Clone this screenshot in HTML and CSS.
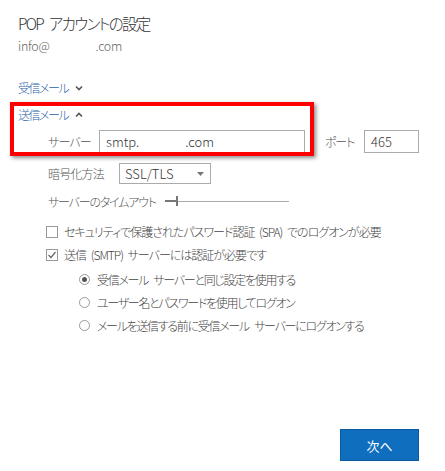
FILE: index.html
```html
<!DOCTYPE html>
<html lang="ja">
<head>
    <meta charset="UTF-8">
    <meta name="viewport" content="width=device-width, initial-scale=1.0">
    <title>POP アカウントの設定</title>
    <link rel="stylesheet" href="styles.css">
</head>
<body>
    <div class="page">
        <h1 class="title">POP アカウントの設定</h1>
        <div class="account">info@<span class="masked masked-mail"></span>.com</div>

        <!-- 受信メール (collapsed) -->
        <div class="section-toggle section-incoming">受信メール
            <svg class="chevron" width="8" height="6" viewBox="0 0 8 6"><path d="M1 1.5 L4 4.5 L7 1.5" fill="none" stroke="#555" stroke-width="1.6"/></svg>
        </div>

        <!-- 送信メール (expanded) -->
        <div class="section-toggle section-outgoing">送信メール
            <svg class="chevron" width="8" height="6" viewBox="0 0 8 6"><path d="M1 4.5 L4 1.5 L7 4.5" fill="none" stroke="#555" stroke-width="1.6"/></svg>
        </div>

        <div class="row row-server">
            <span class="field-label label-server">サーバー</span>
            <div class="textbox textbox-server">smtp.<span class="masked masked-host"></span>.com</div>
            <span class="field-label label-port">ポート</span>
            <div class="textbox textbox-port">465</div>
        </div>

        <div class="row row-crypto">
            <span class="field-label label-crypto">暗号化方法</span>
            <div class="select">SSL/TLS
                <svg class="select-arrow" width="7" height="4" viewBox="0 0 7 4"><path d="M0 0 H7 L3.5 4 Z" fill="#777"/></svg>
            </div>
        </div>

        <div class="row row-timeout">
            <span class="field-label label-timeout">サーバーのタイムアウト</span>
            <div class="slider">
                <div class="slider-fill"></div>
                <div class="slider-thumb"></div>
                <div class="slider-track"></div>
            </div>
        </div>

        <div class="checks">
            <div class="check">
                <span class="checkbox"></span>
                <span>セキュリティで保護されたパスワード認証 (SPA) でのログオンが必要</span>
            </div>
            <div class="check">
                <span class="checkbox">
                    <svg width="10" height="10" viewBox="0 0 10 10"><path d="M1.5 5 L4 7.5 L8.5 2" fill="none" stroke="#666" stroke-width="1.2"/></svg>
                </span>
                <span>送信 (SMTP) サーバーには認証が必要です</span>
            </div>
        </div>

        <div class="radios">
            <div class="radio-row">
                <span class="radio selected"></span>
                <span>受信メール サーバーと同じ設定を使用する</span>
            </div>
            <div class="radio-row">
                <span class="radio"></span>
                <span>ユーザー名とパスワードを使用してログオン</span>
            </div>
            <div class="radio-row">
                <span class="radio"></span>
                <span>メールを送信する前に受信メール サーバーにログオンする</span>
            </div>
        </div>

        <div class="footer">
            <button class="next-button">次へ</button>
        </div>
    </div>

    <!-- annotation highlight -->
    <div class="highlight"></div>
</body>
</html>
```

FILE: styles.css
```css
body {
    margin: 0;
    background: #fff;
    font-family: "Noto Sans CJK JP", "Noto Sans", sans-serif;
    font-feature-settings: "palt";
    font-weight: 300;
    color: #555;
}
.page {
    position: relative;
    box-sizing: border-box;
    height: 471px;
    padding: 12px 0 10px 18px;
    display: flex;
    flex-direction: column;
}
.title {
    margin: 0;
    font-size: 15.5px;
    font-weight: 300;
    letter-spacing: -1.7px;
    word-spacing: 4px;
    line-height: 22px;
    color: #333;
}
.account {
    margin-top: 3px;
    font-size: 12.5px;
    letter-spacing: -0.3px;
    line-height: 18px;
    color: #666;
}
.masked {
    display: inline-block;
}
.masked-mail {
    width: 46px;
}
.masked-host {
    width: 46px;
}
.section-toggle {
    font-size: 12px;
    letter-spacing: -1.5px;
    line-height: 18px;
    color: #2a62a8;
    display: flex;
    align-items: center;
}
.section-incoming {
    margin-top: 24px;
}
.section-outgoing {
    margin-top: 9px;
}
.chevron {
    margin-left: 7px;
}
.row {
    display: flex;
    align-items: center;
    padding-left: 30px;
    font-size: 12px;
    letter-spacing: -0.8px;
    white-space: nowrap;
}
.row-server {
    margin-top: 6px;
    height: 23px;
}
.row-crypto {
    margin-top: 10px;
    height: 21px;
}
.row-timeout {
    margin-top: 9px;
    height: 16px;
}
.field-label {
    color: #555;
}
.label-server {
    width: 51px;
}
.label-port {
    width: 39px;
    margin-left: 20px;
    letter-spacing: -1.2px;
}
.label-crypto {
    width: 71px;
}
.label-timeout {
    width: 117px;
    letter-spacing: -1.2px;
}
.textbox {
    box-sizing: border-box;
    height: 23px;
    border: 1px solid #ababab;
    padding: 0 6px;
    line-height: 21px;
    font-size: 13px;
    letter-spacing: 0;
    color: #333;
}
.textbox-server {
    width: 206px;
}
.textbox-port {
    width: 55px;
}
.select {
    box-sizing: border-box;
    width: 92px;
    height: 21px;
    border: 1px solid #ababab;
    padding: 0 5px;
    line-height: 19px;
    font-size: 13px;
    letter-spacing: 0;
    color: #333;
    display: flex;
    align-items: center;
    justify-content: space-between;
}
.select-arrow {
    margin-right: 1px;
}
.slider {
    display: flex;
    align-items: center;
    width: 124px;
    height: 11px;
}
.slider-fill {
    width: 11px;
    height: 2px;
    background: #777;
}
.slider-thumb {
    width: 2px;
    height: 10px;
    background: #777;
}
.slider-track {
    flex: 1;
    height: 1px;
    background: #aaa;
}
.checks {
    margin-top: 11px;
}
.check {
    display: flex;
    align-items: center;
    height: 23px;
    padding-left: 28px;
    font-size: 12px;
    letter-spacing: -1px;
    word-spacing: 3px;
    white-space: nowrap;
    color: #444;
}
.checkbox {
    box-sizing: border-box;
    width: 12px;
    height: 12px;
    border: 1px solid #999;
    margin-right: 6px;
    display: flex;
    align-items: center;
    justify-content: center;
    background: #fff;
}
.radios {
    margin-top: 2px;
}
.radio-row {
    display: flex;
    align-items: center;
    height: 23px;
    padding-left: 61px;
    font-size: 12px;
    letter-spacing: -1.3px;
    word-spacing: 4px;
    white-space: nowrap;
    color: #444;
}
.radio {
    box-sizing: border-box;
    width: 11px;
    height: 11px;
    border: 1px solid #999;
    border-radius: 50%;
    margin-right: 7px;
    position: relative;
}
.radio.selected::after {
    content: "";
    position: absolute;
    left: 2px;
    top: 2px;
    width: 5px;
    height: 5px;
    border-radius: 50%;
    background: #555;
}
.footer {
    margin-top: auto;
    display: flex;
    justify-content: flex-end;
    padding-right: 26px;
}
.next-button {
    box-sizing: border-box;
    width: 79px;
    height: 32px;
    background: #106ebe;
    border: 1px solid #0b5a9e;
    color: #fff;
    font-family: inherit;
    font-weight: 400;
    font-size: 13px;
    padding: 0;
}
.highlight {
    position: absolute;
    left: 10px;
    top: 102px;
    width: 304px;
    height: 54px;
    box-sizing: border-box;
    border: 4px solid #f00;
    box-shadow: 2px 2px 4px rgba(0, 0, 0, 0.45);
    pointer-events: none;
}
```
